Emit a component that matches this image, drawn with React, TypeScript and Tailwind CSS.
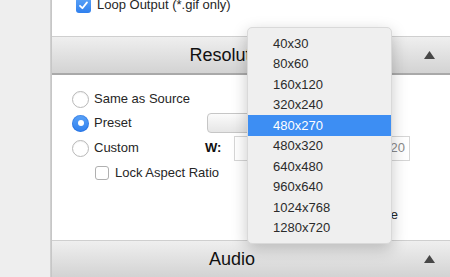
import React from "react";

const font = { fontFamily: '"Liberation Sans", Arial, sans-serif' };

function Radio({ checked }: { checked?: boolean }) {
  return checked ? (
    <span className="flex h-[17px] w-[17px] shrink-0 items-center justify-center rounded-full bg-gradient-to-b from-[#5aa2f7] to-[#2f80ee] shadow-[inset_0_0_0_1px_rgba(0,70,200,0.25)]">
      <span className="h-[6px] w-[6px] rounded-full bg-white" />
    </span>
  ) : (
    <span className="h-[17px] w-[17px] shrink-0 rounded-full border border-[#b8b8b8] bg-white shadow-[inset_0_1px_1px_rgba(0,0,0,0.05)]" />
  );
}

function Header({ title }: { title: string }) {
  return (
    <div className="flex h-[39px] shrink-0 items-center border-t border-[#cfcfcf] bg-gradient-to-b from-[#efefef] to-[#d3d3d3] border-b-2 border-b-[#a9a9a9]">
      <div className="flex-1 text-center text-[18px] text-[#111]">{title}</div>
      <div className="flex w-[38px] items-center justify-center pr-[4px]">
        <svg width="11" height="8" viewBox="0 0 11 8">
          <path d="M5.5 0 L11 8 L0 8 Z" fill="#474747" />
        </svg>
      </div>
    </div>
  );
}

const items = [
  "40x30",
  "80x60",
  "160x120",
  "320x240",
  "480x270",
  "480x320",
  "640x480",
  "960x640",
  "1024x768",
  "1280x720",
];

export default function App() {
  return (
    <div style={font} className="relative flex h-[277px] w-[450px] overflow-hidden bg-white text-[13px] text-[#262626]">
      <div className="w-[50px] shrink-0 bg-[#eeeeee]" />
      <div className="w-[2px] shrink-0 bg-gradient-to-r from-[#d4d4d4] to-[#c2c2c2]" />
      <div className="flex min-w-0 flex-1 flex-col">
        <div className="-mt-[5px] flex h-[20px] shrink-0 items-center pl-[24px]">
          <span className="flex h-[15px] w-[15px] items-center justify-center rounded-[3px] bg-gradient-to-b from-[#5aa2f7] to-[#2f80ee]">
            <svg width="11" height="11" viewBox="0 0 11 11">
              <path d="M2 5.8 L4.4 8.2 L9 2.4" stroke="white" strokeWidth="1.8" fill="none" strokeLinecap="round" strokeLinejoin="round" />
            </svg>
          </span>
          <span className="ml-[6px]">Loop Output (*.gif only)</span>
        </div>
        <div className="h-[21px] shrink-0" />
        <Header title="Resolution" />
        <div className="h-[12px] shrink-0" />
        <div className="flex h-[24px] shrink-0 items-center pl-[20px]">
          <Radio />
          <span className="ml-[5px]">Same as Source</span>
        </div>
        <div className="flex h-[24px] shrink-0 items-center pl-[20px]">
          <div className="flex w-[135px] items-center">
            <Radio checked />
            <span className="ml-[5px]">Preset</span>
          </div>
          <div className="h-[20px] w-[180px] rounded-[4px] border border-[#c6c6c6] bg-gradient-to-b from-[#fbfbfb] to-[#e6e6e6]" />
        </div>
        <div className="flex h-[26px] shrink-0 items-center pl-[20px]">
          <div className="flex w-[133px] items-center">
            <Radio />
            <span className="ml-[5px]">Custom</span>
          </div>
          <span className="w-[29px] font-bold text-[#111]">W:</span>
          <div className="h-[25px] w-[80px] border border-[#d6d6d6] bg-white" />
          <span className="ml-[10px] w-[20px] font-bold text-[#111]">H:</span>
          <div className="flex h-[25px] w-[66px] items-center justify-end border border-[#d6d6d6] bg-white pr-[4px] text-[#8a8a8a]">
            720
          </div>
        </div>
        <div className="flex h-[24px] shrink-0 items-center pl-[43px]">
          <span className="h-[14px] w-[14px] rounded-[3px] border border-[#b0b0b0] bg-white" />
          <span className="ml-[6px]">Lock Aspect Ratio</span>
        </div>
        <div className="h-[20px] shrink-0" />
        <div className="flex h-[20px] shrink-0 items-center justify-end pr-[52px]">
          <span>Fill Frame</span>
        </div>
        <div className="h-[15px] shrink-0" />
        <Header title="Audio" />
      </div>

      <div className="absolute left-[247px] top-[27px] w-[145px] rounded-[5px] border border-[#d9d9d9] bg-[#efefef] py-[5px] shadow-[0_5px_16px_rgba(0,0,0,0.22)]">
        {items.map((it) => (
          <div
            key={it}
            className={
              it === "480x270"
                ? "flex h-[20.5px] items-center bg-[#3d8ef3] pl-[25px] text-white"
                : "flex h-[20.5px] items-center pl-[25px] text-[#2b2b2b]"
            }
          >
            {it}
          </div>
        ))}
      </div>
    </div>
  );
}
